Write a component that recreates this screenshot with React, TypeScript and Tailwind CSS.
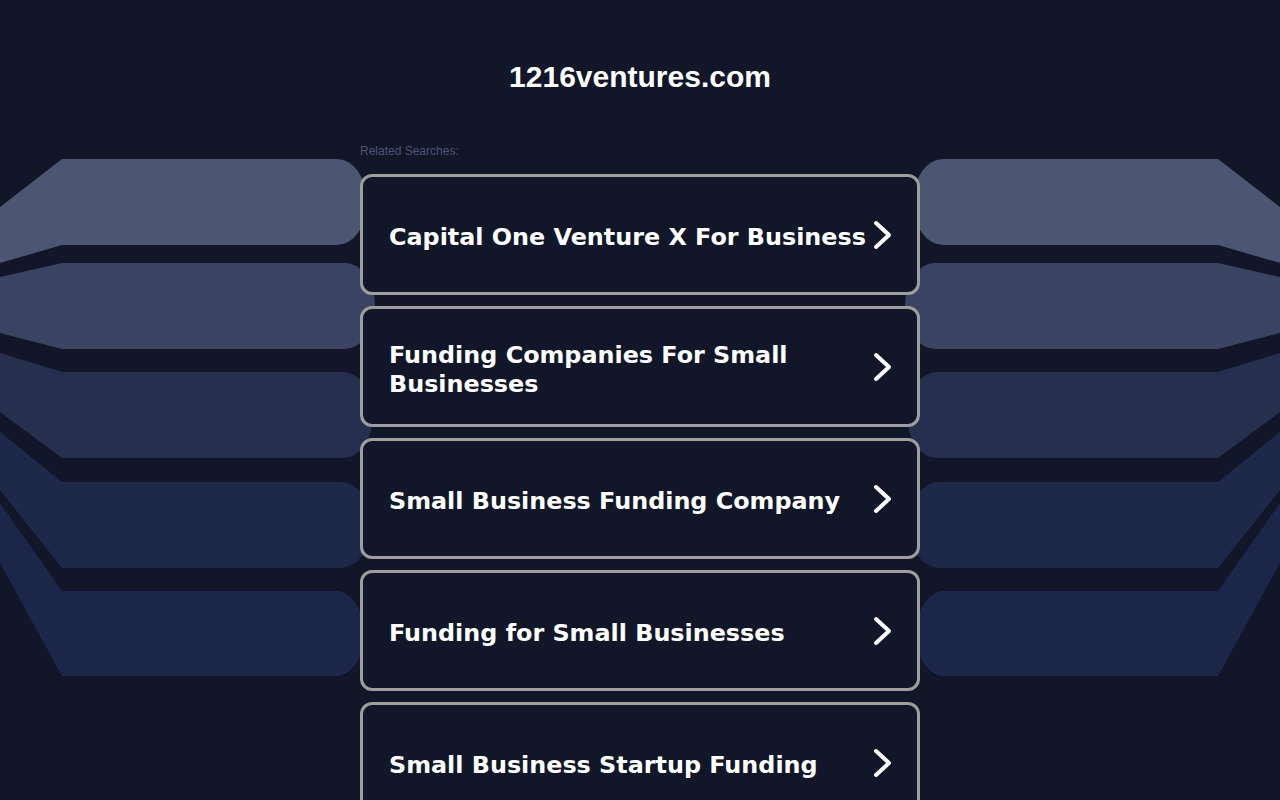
import React from "react";

const items = [
  "Capital One Venture X For Business",
  "Funding Companies For Small Businesses",
  "Small Business Funding Company",
  "Funding for Small Businesses",
  "Small Business Startup Funding",
];

function Bands() {
  const left = (
    <>
      <path d="M0,207 L62,159 L337,159 A30 43 0 0 1 337,245 L62,245 L0,263 Z" fill="#4c5673" />
      <path d="M0,277 L62,263 L345,263 A30 43 0 0 1 345,349 L62,349 L0,333 Z" fill="#3a4361" />
      <path d="M0,353 L62,372 L343,372 A30 43 0 0 1 343,458 L62,458 L0,412 Z" fill="#262f4e" />
      <path d="M0,432 L62,482 L341,482 A30 43 0 0 1 341,568 L62,568 L0,490 Z" fill="#1d2748" />
      <path d="M0,432 L62,482 L341,482 A30 43 0 0 1 341,568 L62,568 L0,490 Z" fill="url(#dots)" />
      <path d="M0,503 L62,591 L339,591 A30 43 0 0 1 339,676 L62,676 L0,563 Z" fill="#1b2547" />
      <path d="M0,503 L62,591 L339,591 A30 43 0 0 1 339,676 L62,676 L0,563 Z" fill="url(#dots)" />
    </>
  );
  return (
    <svg className="absolute inset-0" width="1280" height="800" viewBox="0 0 1280 800">
      <defs>
        <pattern id="dots" width="4" height="4" patternUnits="userSpaceOnUse">
          <rect x="0" y="0" width="1" height="1" fill="#222d50" />
          <rect x="2" y="2" width="1" height="1" fill="#222d50" />
        </pattern>
      </defs>
      <g>{left}</g>
      <g transform="translate(1280,0) scale(-1,1)">{left}</g>
    </svg>
  );
}

function Chevron() {
  return (
    <svg width="22" height="30" viewBox="0 0 22 30" className="shrink-0">
      <polyline points="4,3 17,15 4,27" fill="none" stroke="#ffffff" strokeWidth="4" strokeLinecap="round" strokeLinejoin="round" />
    </svg>
  );
}

export default function App() {
  return (
    <div className="relative w-full h-[800px] overflow-hidden bg-[#111729]">
      <Bands />
      <div className="relative flex flex-col items-center">
        <h1
          className="mt-[59px] text-[30px] leading-[36px] font-bold text-white"
          style={{ fontFamily: '"Liberation Sans", Arial, sans-serif' }}
        >
          1216ventures.com
        </h1>
        <div className="w-[560px] mt-[49px]">
          <div
            className="text-[12px] leading-[14px] text-[#4a5473]"
            style={{ fontFamily: '"Liberation Sans", Arial, sans-serif' }}
          >
            Related Searches:
          </div>
          <div className="mt-[16px] flex flex-col gap-[11px]">
            {items.map((t) => (
              <div
                key={t}
                className="h-[121px] rounded-[12px] border-[3px] border-[#9e9e9e] bg-[#111729] flex items-center justify-between pl-[26px] pr-[23px]"
              >
                <span
                  className="mt-[6px] text-[23.85px] leading-[29px] font-bold text-white max-w-[482px]"
                  style={{ fontFamily: '"DejaVu Sans", Verdana, sans-serif' }}
                >
                  {t}
                </span>
                <Chevron />
              </div>
            ))}
          </div>
        </div>
      </div>
    </div>
  );
}
